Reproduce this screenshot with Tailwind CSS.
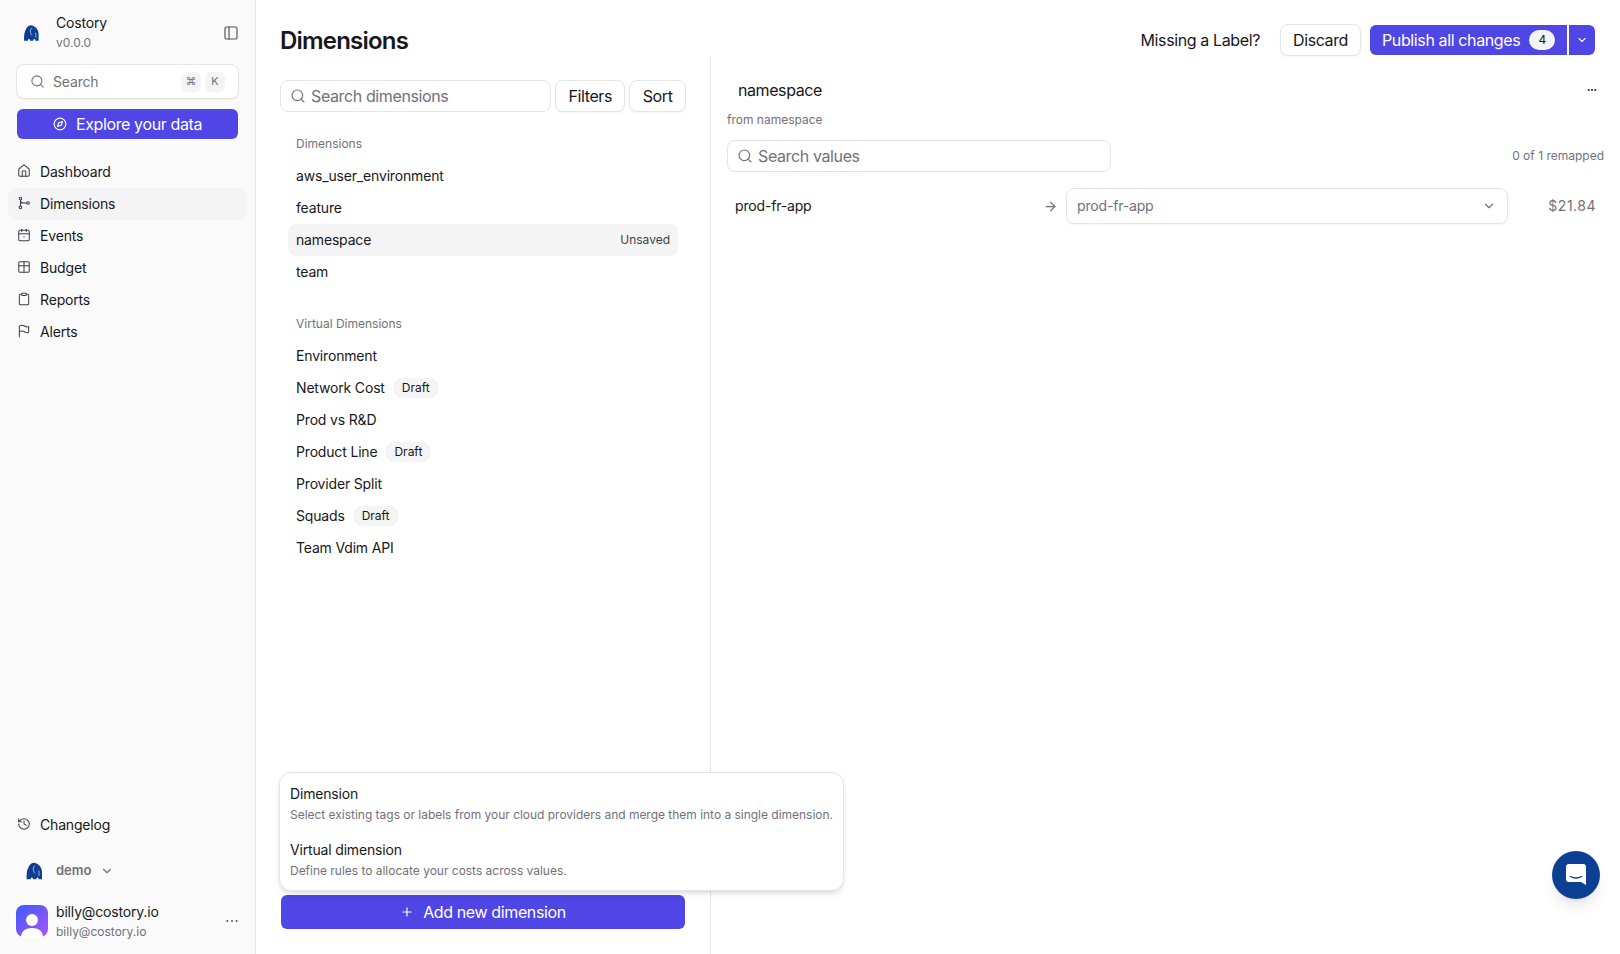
<!DOCTYPE html>
<html lang="en">
<head>
    <meta charset="UTF-8">
    <meta name="viewport" content="width=device-width, initial-scale=1.0">
    <title>Dimensions</title>
    <script src="https://cdn.jsdelivr.net/npm/@tailwindcss/browser@4"></script>
</head>
<body class="h-screen overflow-hidden bg-white font-['Inter',sans-serif] text-[#18181b]">
<div class="flex h-[954px]">

    <!-- sidebar -->
    <aside class="flex w-[256px] shrink-0 flex-col border-r border-[#e4e4e7] bg-[#fafafa]">
        <div class="flex h-[64px] items-center pl-[23px] pr-[16px] pt-[1px]">
            <svg class="h-[18px] w-[17px] text-[#0f3d91]" viewBox="0 0 24 24" fill="currentColor"><path d="M12 1C8 1 6 3 4.500 6 2.500 9 1.500 14 1.500 18v5h5.500c0-1.500.3-2.500 1.500-2.500s1.500 1 1.500 2.500h4.500c0-1.500.3-2.500 1.500-2.500s1.500 1 1.500 2.500h4.500v-8C22.500 10 20 3 12 1z"/><path d="M12.500 5C9.500 6 9.500 12 12.500 15M18 12v6" fill="none" stroke="#fff" stroke-width=".8" stroke-linecap="round"/></svg>
            <div class="ml-[16px] flex-1 leading-none">
                <div class="text-[14px] leading-[20px] tracking-[-0.17px]">Costory</div>
                <div class="text-[12px] leading-[20px] text-[#71717a]">v0.0.0</div>
            </div>
            <svg class="h-[16px] w-[16px] text-[#52525b]" viewBox="0 0 24 24" fill="none" stroke="currentColor" stroke-width="1.75" stroke-linecap="round" stroke-linejoin="round"><rect x="3" y="3" width="18" height="18" rx="2"/><path d="M9 3v18"/></svg>
        </div>

        <div class="px-[16px]">
            <div class="flex h-[35px] items-center rounded-lg border border-[#e4e4e7] bg-white px-[13px] shadow-xs">
                <svg class="h-[15px] w-[15px] text-[#71717a]" viewBox="0 0 24 24" fill="none" stroke="currentColor" stroke-width="1.75" stroke-linecap="round" stroke-linejoin="round"><circle cx="11" cy="11" r="8"/><path d="m21 21-4.3-4.3"/></svg>
                <span class="ml-[8px] flex-1 text-[14px] tracking-[-0.17px] text-[#71717a]">Search</span>
                <span class="flex h-[20px] w-[20px] items-center justify-center rounded-md bg-[#f4f4f5] text-[11px] text-[#71717a]">⌘</span>
                <span class="ml-[4px] flex h-[20px] w-[20px] items-center justify-center rounded-md bg-[#f4f4f5] text-[11px] text-[#71717a]">K</span>
            </div>
            <button class="ml-[1px] mt-[10px] flex h-[30px] w-[221px] items-center justify-center gap-[9px] rounded-md bg-[#4f46e5] text-[16px] tracking-[-0.38px] text-white">
                <svg class="h-[14px] w-[14px]" viewBox="0 0 24 24" fill="none" stroke="currentColor" stroke-width="2" stroke-linecap="round" stroke-linejoin="round"><circle cx="12" cy="12" r="10"/><path d="m16.24 7.76-2.12 6.36-6.36 2.12 2.12-6.36 6.36-2.12z"/></svg>
                Explore your data
            </button>
        </div>

        <nav class="mt-[17px] flex flex-col px-[8px] text-[14px] tracking-[-0.17px]">
            <a class="flex h-[32px] items-center gap-[9px] px-[9px] pb-[2px]">
                <svg class="h-[14px] w-[14px] text-[#3f3f46]" viewBox="0 0 24 24" fill="none" stroke="currentColor" stroke-width="1.75" stroke-linecap="round" stroke-linejoin="round"><path d="M15 21v-8a1 1 0 0 0-1-1h-4a1 1 0 0 0-1 1v8"/><path d="M3 10a2 2 0 0 1 .709-1.528l7-5.999a2 2 0 0 1 2.582 0l7 5.999A2 2 0 0 1 21 10v9a2 2 0 0 1-2 2H5a2 2 0 0 1-2-2z"/></svg>
                Dashboard
            </a>
            <a class="flex h-[32px] items-center gap-[9px] rounded-lg bg-[#f4f4f5] px-[9px] pb-[2px]">
                <svg class="h-[14px] w-[14px] text-[#3f3f46]" viewBox="0 0 24 24" fill="none" stroke="currentColor" stroke-width="1.75" stroke-linecap="round" stroke-linejoin="round"><circle cx="6" cy="4.500" r="2.200"/><circle cx="6" cy="19.500" r="2.200"/><circle cx="19" cy="12" r="2.200"/><path d="M6 6.700v10.600"/><path d="M6 8c0 2.500 2 4 5 4h5.800"/></svg>
                Dimensions
            </a>
            <a class="flex h-[32px] items-center gap-[9px] px-[9px] pb-[2px]">
                <svg class="h-[14px] w-[14px] text-[#3f3f46]" viewBox="0 0 24 24" fill="none" stroke="currentColor" stroke-width="1.75" stroke-linecap="round" stroke-linejoin="round"><path d="M8 2v4"/><path d="M16 2v4"/><rect x="3" y="4" width="18" height="18" rx="2"/><path d="M3 10h18"/><path d="M12 15v1"/></svg>
                Events
            </a>
            <a class="flex h-[32px] items-center gap-[9px] px-[9px] pb-[2px]">
                <svg class="h-[14px] w-[14px] text-[#3f3f46]" viewBox="0 0 24 24" fill="none" stroke="currentColor" stroke-width="1.75" stroke-linecap="round" stroke-linejoin="round"><rect x="3" y="3" width="18" height="18" rx="2"/><path d="M12 3v18"/><path d="M3 10h18"/></svg>
                Budget
            </a>
            <a class="flex h-[32px] items-center gap-[9px] px-[9px] pb-[2px]">
                <svg class="h-[14px] w-[14px] text-[#3f3f46]" viewBox="0 0 24 24" fill="none" stroke="currentColor" stroke-width="1.75" stroke-linecap="round" stroke-linejoin="round"><rect x="8" y="2" width="8" height="4" rx="1"/><path d="M16 4h2a2 2 0 0 1 2 2v14a2 2 0 0 1-2 2H6a2 2 0 0 1-2-2V6a2 2 0 0 1 2-2h2"/></svg>
                Reports
            </a>
            <a class="flex h-[32px] items-center gap-[9px] px-[9px] pb-[2px]">
                <svg class="h-[14px] w-[14px] text-[#3f3f46]" viewBox="0 0 24 24" fill="none" stroke="currentColor" stroke-width="1.75" stroke-linecap="round" stroke-linejoin="round"><path d="M4 22V4s2-2 5-2 5 3 8 3 3-1 3-1v10s-1 1-3 1-5-3-8-3-5 1-5 1"/></svg>
                Alerts
            </a>
        </nav>

        <div class="mt-auto px-[8px] text-[14px] tracking-[-0.17px]">
            <a class="flex h-[32px] items-center gap-[9px] px-[9px] pb-[2px]">
                <svg class="h-[14px] w-[14px] text-[#3f3f46]" viewBox="0 0 24 24" fill="none" stroke="currentColor" stroke-width="1.75" stroke-linecap="round" stroke-linejoin="round"><path d="M3 12a9 9 0 1 0 9-9 9.750 9.750 0 0 0-6.740 2.740L3 8"/><path d="M3 3v5h5"/><path d="M12 7v5l4 2"/></svg>
                Changelog
            </a>
        </div>
        <div class="mt-[14px] flex h-[32px] items-center pl-[25px]">
            <svg class="h-[18px] w-[19px] text-[#0f3d91]" viewBox="0 0 24 24" fill="currentColor"><path d="M12 1C8 1 6 3 4.500 6 2.500 9 1.500 14 1.500 18v5h5.500c0-1.500.3-2.500 1.500-2.500s1.500 1 1.500 2.500h4.500c0-1.500.3-2.500 1.500-2.500s1.500 1 1.500 2.500h4.500v-8C22.500 10 20 3 12 1z"/><path d="M12.500 5C9.500 6 9.500 12 12.500 15M18 12v6" fill="none" stroke="#fff" stroke-width=".8" stroke-linecap="round"/></svg>
            <span class="ml-[12px] text-[13px] font-semibold text-[#71717a]">demo</span>
            <svg class="ml-[9px] h-[14px] w-[14px] text-[#71717a]" viewBox="0 0 24 24" fill="none" stroke="currentColor" stroke-width="2" stroke-linecap="round" stroke-linejoin="round"><path d="m6 9 6 6 6-6"/></svg>
        </div>
        <div class="mb-[17px] mt-[18px] flex h-[32px] items-center pl-[16px] pr-[16px]">
            <svg class="h-[32px] w-[32px]" viewBox="0 0 32 32">
                <defs><linearGradient id="av" x1="0" y1="0" x2="1" y2="1"><stop offset="0" stop-color="#3b5bfb"/><stop offset="1" stop-color="#a855f7"/></linearGradient></defs>
                <rect width="32" height="32" rx="8" fill="url(#av)"/>
                <circle cx="16" cy="15" r="6" fill="#fff"/>
                <path d="M5 32c0-6 5-9 11-9s11 3 11 9z" fill="#fff"/>
            </svg>
            <div class="ml-[8px] flex-1">
                <div class="text-[14px] leading-[20px] tracking-[-0.17px]">billy@costory.io</div>
                <div class="mt-[1px] text-[12px] leading-[18px] text-[#71717a]">billy@costory.io</div>
            </div>
            <svg class="h-[14px] w-[14px] text-[#52525b]" viewBox="0 0 24 24" fill="currentColor"><circle cx="4" cy="12" r="1.700"/><circle cx="12" cy="12" r="1.700"/><circle cx="20" cy="12" r="1.700"/></svg>
        </div>
    </aside>

    <!-- main -->
    <main class="flex min-w-0 flex-1 flex-col">
        <header class="flex h-[56px] shrink-0 items-center justify-between pl-[24px] pr-[25px] pt-[24px]">
            <h1 class="mt-[2px] text-[24px] font-semibold leading-[32px] tracking-[-0.8px]">Dimensions</h1>
            <div class="flex items-center text-[16px] tracking-[-0.38px]">
                <span>Missing a Label?</span>
                <button class="ml-[20px] h-[32px] w-[81px] rounded-lg border border-[#e4e4e7] bg-white shadow-xs">Discard</button>
                <button class="ml-[9px] flex h-[30px] w-[197px] items-center rounded-l-md bg-[#4f46e5] pl-[12px] text-white">
                    Publish all changes
                    <span class="ml-[9px] flex h-[20px] w-[26px] items-center justify-center rounded-full bg-[#f4f4f5] text-[12px] tracking-normal text-[#18181b]">4</span>
                </button>
                <button class="ml-[2px] flex h-[30px] w-[26px] items-center justify-center rounded-r-md bg-[#4f46e5] text-white">
                    <svg class="h-[12px] w-[12px]" viewBox="0 0 24 24" fill="none" stroke="currentColor" stroke-width="2.200" stroke-linecap="round" stroke-linejoin="round"><path d="m6 9 6 6 6-6"/></svg>
                </button>
            </div>
        </header>

        <div class="flex min-h-0 flex-1">
            <!-- dimension list -->
            <section class="relative flex w-[455px] shrink-0 flex-col border-r border-[#e4e4e7] px-[24px]">
                <div class="mt-[24px] flex h-[32px] gap-[4px] text-[16px] tracking-[-0.38px]">
                    <div class="flex w-[272px] items-center rounded-lg border border-[#e4e4e7] bg-white px-[9px]">
                        <svg class="h-[16px] w-[16px] text-[#71717a]" viewBox="0 0 24 24" fill="none" stroke="currentColor" stroke-width="1.75" stroke-linecap="round" stroke-linejoin="round"><circle cx="11" cy="11" r="8"/><path d="m21 21-4.3-4.3"/></svg>
                        <span class="ml-[5px] text-[#71717a]">Search dimensions</span>
                    </div>
                    <button class="w-[70px] rounded-lg border border-[#e4e4e7] bg-white shadow-xs">Filters</button>
                    <button class="w-[57px] rounded-lg border border-[#e4e4e7] bg-white shadow-xs">Sort</button>
                </div>

                <div class="mt-[16px] flex flex-col px-[8px] text-[14px] tracking-[-0.17px]">
                    <div class="flex h-[32px] items-center px-[8px] text-[12px] tracking-normal text-[#71717a]">Dimensions</div>
                    <div class="flex h-[32px] items-center px-[8px] pb-[2px]">aws_user_environment</div>
                    <div class="flex h-[32px] items-center px-[8px] pb-[2px]">feature</div>
                    <div class="flex h-[32px] items-center justify-between rounded-lg bg-[#f4f4f5] px-[8px] pb-[2px]">namespace <span class="mt-[2px] text-[12px] tracking-normal text-[#3f3f46]">Unsaved</span></div>
                    <div class="flex h-[32px] items-center px-[8px] pb-[2px]">team</div>

                    <div class="mt-[20px] flex h-[32px] items-center px-[8px] text-[12px] tracking-normal text-[#71717a]">Virtual Dimensions</div>
                    <div class="flex h-[32px] items-center px-[8px] pb-[2px]">Environment</div>
                    <div class="flex h-[32px] items-center px-[8px] pb-[2px]">Network Cost <span class="ml-[8px] mt-[2px] flex h-[20px] items-center rounded-full bg-[#f4f4f5] px-[9px] text-[12px] tracking-normal">Draft</span></div>
                    <div class="flex h-[32px] items-center px-[8px] pb-[2px]">Prod vs R&amp;D</div>
                    <div class="flex h-[32px] items-center px-[8px] pb-[2px]">Product Line <span class="ml-[8px] mt-[2px] flex h-[20px] items-center rounded-full bg-[#f4f4f5] px-[9px] text-[12px] tracking-normal">Draft</span></div>
                    <div class="flex h-[32px] items-center px-[8px] pb-[2px]">Provider Split</div>
                    <div class="flex h-[32px] items-center px-[8px] pb-[2px]">Squads <span class="ml-[8px] mt-[2px] flex h-[20px] items-center rounded-full bg-[#f4f4f5] px-[9px] text-[12px] tracking-normal">Draft</span></div>
                    <div class="flex h-[32px] items-center px-[8px] pb-[2px]">Team Vdim API</div>
                </div>

                <button class="mb-[25px] ml-[1px] mt-auto flex h-[34px] w-[404px] shrink-0 items-center justify-center gap-[9px] rounded-md bg-[#4f46e5] text-[16px] tracking-[-0.38px] text-white">
                    <svg class="h-[14px] w-[14px]" viewBox="0 0 24 24" fill="none" stroke="currentColor" stroke-width="2" stroke-linecap="round" stroke-linejoin="round"><path d="M5 12h14"/><path d="M12 5v14"/></svg>
                    Add new dimension
                </button>

                <!-- add dimension menu -->
                <div class="absolute bottom-[63px] left-[23px] z-10 w-[565px] rounded-xl border border-[#e4e4e7] bg-white px-[10px] pb-[10px] pt-[11px] shadow-md">
                    <div class="text-[14px] leading-[20px] tracking-[-0.17px]">Dimension</div>
                    <div class="mt-[2px] whitespace-nowrap text-[12px] leading-[18px] tracking-[-0.02px] text-[#71717a]">Select existing tags or labels from your cloud providers and merge them into a single dimension.</div>
                    <div class="mt-[16px] text-[14px] leading-[20px] tracking-[-0.17px]">Virtual dimension</div>
                    <div class="mt-[2px] text-[12px] leading-[18px] tracking-[-0.02px] text-[#71717a]">Define rules to allocate your costs across values.</div>
                </div>
            </section>

            <!-- values panel -->
            <section class="min-w-0 flex-1 pl-[16px] pr-[16px]">
                <div class="mt-[22px] flex h-[24px] items-center justify-between pl-[11px] pr-[7px]">
                    <span class="text-[16px] tracking-[-0.42px]">namespace</span>
                    <svg class="h-[10px] w-[10px]" viewBox="0 0 24 24" fill="#18181b"><circle cx="4" cy="12" r="2.400"/><circle cx="12" cy="12" r="2.400"/><circle cx="20" cy="12" r="2.400"/></svg>
                </div>
                <div class="mt-[9px] text-[12px] leading-[18px] text-[#71717a]">from namespace</div>
                <div class="mt-[11px] flex items-center justify-between">
                    <div class="flex h-[32px] w-[384px] items-center rounded-lg border border-[#e4e4e7] bg-white px-[9px]">
                        <svg class="h-[16px] w-[16px] text-[#71717a]" viewBox="0 0 24 24" fill="none" stroke="currentColor" stroke-width="1.75" stroke-linecap="round" stroke-linejoin="round"><circle cx="11" cy="11" r="8"/><path d="m21 21-4.3-4.3"/></svg>
                        <span class="ml-[5px] text-[16px] tracking-[-0.38px] text-[#71717a]">Search values</span>
                    </div>
                    <span class="text-[12px] text-[#71717a]">0 of 1 remapped</span>
                </div>
                <div class="mt-[16px] flex h-[36px] items-center pl-[8px] pr-[8px] text-[14px] tracking-[-0.17px]">
                    <span class="flex-1 pb-[2px]">prod-fr-app</span>
                    <svg class="h-[15px] w-[15px] text-[#71717a]" viewBox="0 0 24 24" fill="none" stroke="currentColor" stroke-width="2" stroke-linecap="round" stroke-linejoin="round"><path d="M5 12h14"/><path d="m12 5 7 7-7 7"/></svg>
                    <div class="ml-[8px] flex h-[36px] w-[442px] items-center justify-between rounded-lg border border-[#e4e4e7] bg-white pb-[1px] pl-[10px] pr-[11px] text-[#71717a] shadow-xs">
                        prod-fr-app
                        <svg class="h-[14px] w-[14px]" viewBox="0 0 24 24" fill="none" stroke="currentColor" stroke-width="2" stroke-linecap="round" stroke-linejoin="round"><path d="m6 9 6 6 6-6"/></svg>
                    </div>
                    <span class="w-[88px] pb-[2px] text-right tracking-[0.5px] text-[#71717a]">$21.84</span>
                </div>
            </section>
        </div>
    </main>
</div>

<!-- chat launcher -->
<button class="fixed bottom-[55px] right-[20px] flex h-[48px] w-[48px] items-center justify-center rounded-full bg-[#0d3f93] shadow-lg">
    <svg class="h-[24px] w-[24px]" viewBox="0 0 24 24"><path d="M5 1h14a3 3 0 0 1 3 3v18l-5-3H5a3 3 0 0 1-3-3V4a3 3 0 0 1 3-3z" fill="#fff"/><path d="M6.500 13.500c3 2 8 2 11 0" fill="none" stroke="#0d3f93" stroke-width="1.500" stroke-linecap="round"/></svg>
</button>
</body>
</html>
